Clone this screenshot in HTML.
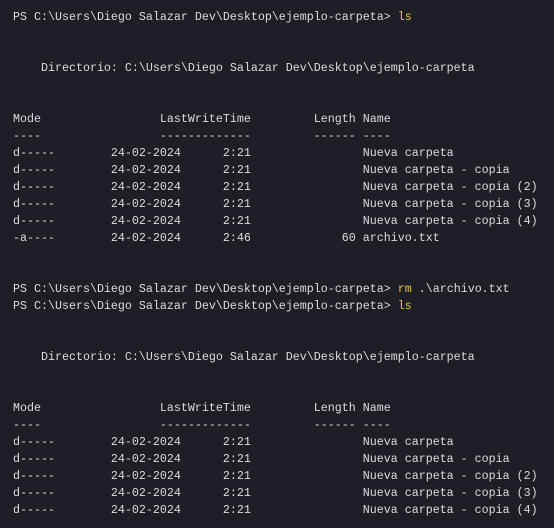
<!DOCTYPE html>
<html><head><meta charset="utf-8"><style>
html,body{margin:0;padding:0;background:#1e1e27;}
body{width:554px;height:528px;overflow:hidden;}
pre{margin:0;padding:9px 0 0 13px;font-family:"Liberation Mono","DejaVu Sans Mono",monospace;font-size:11.67px;line-height:17px;color:#dcdcdc;}
.y{color:#e2c24c;}
</style></head><body><pre>PS C:\Users\Diego Salazar Dev\Desktop\ejemplo-carpeta&gt; <span class="y">ls</span>


    Directorio: C:\Users\Diego Salazar Dev\Desktop\ejemplo-carpeta


Mode                 LastWriteTime         Length Name
----                 -------------         ------ ----
d-----        24-02-2024      2:21                Nueva carpeta
d-----        24-02-2024      2:21                Nueva carpeta - copia
d-----        24-02-2024      2:21                Nueva carpeta - copia (2)
d-----        24-02-2024      2:21                Nueva carpeta - copia (3)
d-----        24-02-2024      2:21                Nueva carpeta - copia (4)
-a----        24-02-2024      2:46             60 archivo.txt


PS C:\Users\Diego Salazar Dev\Desktop\ejemplo-carpeta&gt; <span class="y">rm</span> .\archivo.txt
PS C:\Users\Diego Salazar Dev\Desktop\ejemplo-carpeta&gt; <span class="y">ls</span>


    Directorio: C:\Users\Diego Salazar Dev\Desktop\ejemplo-carpeta


Mode                 LastWriteTime         Length Name
----                 -------------         ------ ----
d-----        24-02-2024      2:21                Nueva carpeta
d-----        24-02-2024      2:21                Nueva carpeta - copia
d-----        24-02-2024      2:21                Nueva carpeta - copia (2)
d-----        24-02-2024      2:21                Nueva carpeta - copia (3)
d-----        24-02-2024      2:21                Nueva carpeta - copia (4)
</pre></body></html>
